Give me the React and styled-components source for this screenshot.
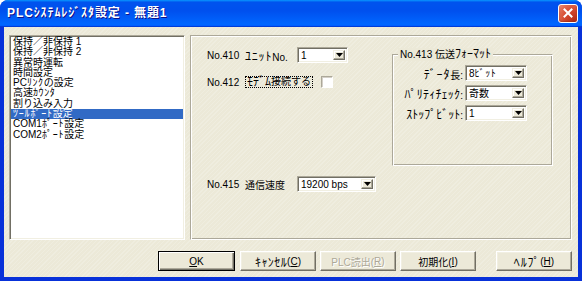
import React from "react";
import styled, { createGlobalStyle } from "styled-components";

const GlobalStyle = createGlobalStyle`
  html, body { margin: 0; padding: 0; background: #ffffff; }
  body { font-family: "Liberation Sans", "Noto Sans CJK JP", sans-serif; font-size: 10px; }
  * { box-sizing: border-box; }
`;

const FONT = `"Liberation Sans", "Noto Sans CJK JP", sans-serif`;
const BEIGE = "#ECE9D8";

const Window = styled.div`
  width: 582px;
  height: 281px;
  display: flex;
  flex-direction: column;
  border-radius: 8px 8px 0 0;
  overflow: hidden;
  background: #0831d9;
`;

const TitleBar = styled.div`
  height: 27px;
  flex: none;
  display: flex;
  align-items: center;
  justify-content: space-between;
  padding: 0 4px 0 7px;
  background: linear-gradient(
    180deg,
    #0997ff 0%,
    #0053ee 8%,
    #0050ee 40%,
    #0066ff 88%,
    #0066ff 93%,
    #005bff 95%,
    #003dd7 96%,
    #003dd7 100%
  );
`;

const Title = styled.span`
  font-family: "Liberation Sans", "Noto Sans CJK JP", sans-serif;
  font-weight: bold;
  font-size: 12px;
  letter-spacing: 0.9px;
  color: #ffffff;
  text-shadow: 1px 1px 0 #0f1089;
  line-height: 14px;
  margin-top: -1px;
`;

const CloseButton = styled.div`
  width: 20px;
  height: 19px;
  margin-top: -1px;
  border: 1px solid #ffffff;
  border-radius: 3px;
  display: flex;
  align-items: center;
  justify-content: center;
  background: radial-gradient(circle at 85% 85%, #b8301a 0%, #d4482e 45%, #e06a4f 75%, #ec937c 100%);
  background-color: #d4482e;
  box-shadow: inset 0 -1px 2px rgba(110, 20, 0, 0.45);
`;

const Frame = styled.div`
  flex: 1;
  display: flex;
  flex-direction: column;
  border-style: solid;
  border-width: 0 4px 4px 4px;
  border-color: #0831d9;
  background-color: ${BEIGE};
  background-image: repeating-linear-gradient(
    135deg,
    rgba(255, 255, 255, 0.18) 0px,
    rgba(255, 255, 255, 0.18) 1px,
    rgba(0, 0, 0, 0) 1px,
    rgba(0, 0, 0, 0) 3px
  );
  padding: 8px 6px 6px 5px;
`;

const Main = styled.div`
  height: 205px;
  display: flex;
  gap: 5px;
`;

const ListBox = styled.div`
  width: 176px;
  flex: none;
  background: #ffffff;
  border-style: solid;
  border-width: 1px;
  border-color: #aca899 #ffffff #ffffff #aca899;
  box-shadow: inset 1px 1px 0 #716f64, inset -1px -1px 0 #f1efe2;
  padding: 1px 1px;
`;

const ListItem = styled.div`
  height: 10.3px;
  line-height: 10.3px;
  font-family: ${FONT};
  font-size: 10px;
  padding-left: 2px;
  white-space: nowrap;
  color: ${(p) => (p.$selected ? "#ffffff" : "#000000")};
  background: ${(p) => (p.$selected ? "#316ac5" : "transparent")};
`;

/* half-width katakana run: the original UI font draws these larger than the fallback does */
const Kana = styled.span`
  font-size: ${(p) => p.$size ?? 12}px;
  letter-spacing: ${(p) => p.$ls ?? 0}px;
`;

const Panel = styled.div`
  flex: 1;
  border-style: solid;
  border-width: 1px;
  border-color: #aca899 #ffffff #ffffff #aca899;
  box-shadow: inset 1px 1px 0 #ffffff, inset -1px -1px 0 #aca899;
  padding: 11px 0 0 16px;
  display: flex;
  flex-direction: column;
`;

const TopSection = styled.div`
  display: flex;
  align-items: flex-start;
`;

const LeftCol = styled.div`
  display: flex;
  flex-direction: column;
  gap: 11px;
`;

const Row = styled.div`
  height: 16px;
  display: flex;
  align-items: center;
  margin-top: ${(p) => p.$mt || 0}px;
`;

const NoLabel = styled.span`
  width: 38px;
  flex: none;
  font-family: ${FONT};
  font-size: 10px;
  color: #000;
  white-space: nowrap;
`;

const NameLabel = styled.span`
  width: ${(p) => p.$w}px;
  flex: none;
  font-family: ${FONT};
  font-size: 10px;
  color: #000;
  white-space: nowrap;
`;

const FocusLabel = styled.span`
  font-family: ${FONT};
  font-size: 10px;
  color: #000;
  white-space: nowrap;
  border: 1px dotted #000;
  padding: 0 1px;
  line-height: 10px;
  height: 12px;
  display: inline-flex;
  align-items: center;
`;

const CheckBox = styled.span`
  width: 12px;
  height: 12px;
  margin-left: 8px;
  background: #ffffff;
  border-style: solid;
  border-width: 1px;
  border-color: #aca899 #ffffff #ffffff #aca899;
  box-shadow: inset 1px 1px 0 #d4d0c8;
`;

const ComboBox = styled.div`
  width: ${(p) => p.$w}px;
  height: 16px;
  flex: none;
  display: flex;
  align-items: stretch;
  background: #ffffff;
  border-style: solid;
  border-width: 1px;
  border-color: #aca899 #ffffff #ffffff #aca899;
  box-shadow: inset 1px 1px 0 #716f64, inset -1px -1px 0 #f1efe2;
  padding: 2px 2px 2px 2px;
`;

const ComboText = styled.span`
  flex: 1;
  font-family: ${FONT};
  font-size: 10px;
  line-height: 12px;
  color: #000;
  padding-left: 1px;
  white-space: nowrap;
`;

const ComboArrow = styled.span`
  width: 12px;
  flex: none;
  display: flex;
  align-items: center;
  justify-content: center;
  background: ${BEIGE};
  border-style: solid;
  border-width: 1px;
  border-color: #f1efe2 #716f64 #716f64 #f1efe2;
  box-shadow: inset -1px -1px 0 #aca899, inset 1px 1px 0 #ffffff;
`;

const GroupBox = styled.div`
  position: relative;
  width: 161px;
  height: 112px;
  margin-left: auto;
  margin-right: 18px;
  margin-top: 7px;
  border-style: solid;
  border-width: 1px;
  border-color: #aca899 #ffffff #ffffff #aca899;
  box-shadow: inset 1px 1px 0 #ffffff, inset -1px -1px 0 #aca899;
  padding: 10px 25px 0 0;
  display: grid;
  grid-template-columns: 1fr 62px;
  grid-auto-rows: 16px;
  column-gap: 2px;
  row-gap: 4px;
  align-content: start;
  align-items: center;
`;

const Legend = styled.span`
  position: absolute;
  top: -7px;
  left: 5px;
  padding: 0 2px;
  background: ${BEIGE};
  font-family: ${FONT};
  font-size: 10px;
  line-height: 12px;
  color: #000;
  white-space: nowrap;
`;

const GroupLabel = styled.span`
  text-align: right;
  font-family: ${FONT};
  font-size: 10px;
  color: #000;
  white-space: nowrap;
`;

const ButtonBar = styled.div`
  margin-top: 11px;
  height: 20px;
  display: flex;
  justify-content: flex-end;
  gap: 4px;
`;

const Button = styled.div`
  width: ${(p) => (p.$default ? 77 : 76)}px;
  height: 20px;
  margin-left: ${(p) => p.$ml || 0}px;
  margin-right: ${(p) => (p.$default ? 1 : 0)}px;
  display: flex;
  align-items: center;
  justify-content: center;
  font-family: ${FONT};
  font-size: 10px;
  background: ${BEIGE};
  border: 1px solid ${(p) => (p.$default ? "#000000" : "transparent")};
  border-color: ${(p) => (p.$default ? "#000000" : "#ffffff #716f64 #716f64 #ffffff")};
  box-shadow: ${(p) =>
    p.$default
      ? "inset 1px 1px 0 #ffffff, inset -1px -1px 0 #716f64, inset -2px -2px 0 #aca899"
      : "inset -1px -1px 0 #aca899, inset 1px 1px 0 #f1efe2"};
  color: ${(p) => (p.$disabled ? "#aca899" : "#000000")};
  text-shadow: ${(p) => (p.$disabled ? "1px 1px 0 #ffffff" : "none")};
  white-space: nowrap;
`;

const U = styled.span`
  text-decoration: underline;
`;

function Arrow() {
  return (
    <svg width="7" height="4" viewBox="0 0 7 4">
      <path d="M0 0H7L3.5 4Z" fill="#000" />
    </svg>
  );
}

function Combo({ w, children }) {
  return (
    <ComboBox $w={w}>
      <ComboText>{children}</ComboText>
      <ComboArrow>
        <Arrow />
      </ComboArrow>
    </ComboBox>
  );
}

const items = [
  <>保持／非保持 1</>,
  <>保持／非保持 2</>,
  <>異常時運転</>,
  <>時間設定</>,
  <>PC<Kana $size={10} $ls={0.6}>ﾘﾝｸ</Kana>の設定</>,
  <>高速<Kana $size={10} $ls={0.6}>ｶｳﾝﾀ</Kana></>,
  <>割り込み入力</>,
  <><Kana $size={10} $ls={0.8}>ﾂｰﾙﾎﾟｰﾄ</Kana>設定</>,
  <>COM1<Kana $size={10} $ls={0.8}>ﾎﾟｰﾄ</Kana>設定</>,
  <>COM2<Kana $size={10} $ls={0.8}>ﾎﾟｰﾄ</Kana>設定</>,
];

export default function App() {
  return (
    <>
      <GlobalStyle />
      <Window>
        <TitleBar>
          <Title>PLCｼｽﾃﾑﾚｼﾞｽﾀ設定 - 無題1</Title>
          <CloseButton>
            <svg width="10" height="10" viewBox="0 0 10 10">
              <path d="M1.5 1.5L8.5 8.5M8.5 1.5L1.5 8.5" stroke="#fff" strokeWidth="2" strokeLinecap="square" />
            </svg>
          </CloseButton>
        </TitleBar>
        <Frame>
          <Main>
            <ListBox>
              {items.map((t, i) => (
                <ListItem key={i} $selected={i === 7}>
                  {t}
                </ListItem>
              ))}
            </ListBox>
            <Panel>
              <TopSection>
                <LeftCol>
                  <Row>
                    <NoLabel>No.410</NoLabel>
                    <NameLabel $w={52}>
                      <Kana $ls={0.8}>ﾕﾆｯﾄ</Kana>No.
                    </NameLabel>
                    <Combo w={51}>1</Combo>
                  </Row>
                  <Row>
                    <NoLabel>No.412</NoLabel>
                    <FocusLabel>
                      <Kana>ﾓﾃﾞﾑ</Kana>接続する
                    </FocusLabel>
                    <CheckBox />
                  </Row>
                </LeftCol>
                <GroupBox>
                  <Legend>
                    No.413 伝送<Kana>ﾌｫｰﾏｯﾄ</Kana>
                  </Legend>
                  <GroupLabel>
                    <Kana $ls={0.8}>ﾃﾞｰﾀ</Kana>長:
                  </GroupLabel>
                  <Combo w={62}>
                    8<Kana $size={10} $ls={0.6}>ﾋﾞｯﾄ</Kana>
                  </Combo>
                  <GroupLabel>
                    <Kana $ls={0.2}>ﾊﾟﾘﾃｨﾁｪｯｸ</Kana>:
                  </GroupLabel>
                  <Combo w={62}>奇数</Combo>
                  <GroupLabel>
                    <Kana>ｽﾄｯﾌﾟﾋﾞｯﾄ</Kana>:
                  </GroupLabel>
                  <Combo w={62}>1</Combo>
                </GroupBox>
              </TopSection>
              <Row $mt={10}>
                <NoLabel>No.415</NoLabel>
                <NameLabel $w={52}>通信速度</NameLabel>
                <Combo w={79}>19200 bps</Combo>
              </Row>
            </Panel>
          </Main>
          <ButtonBar>
            <Button $default>
              <U>O</U>K
            </Button>
            <Button>
              <Kana $ls={0.4}>ｷｬﾝｾﾙ</Kana>(<U>C</U>)
            </Button>
            <Button $disabled>
              PLC読出(<U>R</U>)
            </Button>
            <Button>
              初期化(<U>I</U>)
            </Button>
            <Button $ml={16}>
              <Kana $ls={0.8}>ﾍﾙﾌﾟ</Kana>(<U>H</U>)
            </Button>
          </ButtonBar>
        </Frame>
      </Window>
    </>
  );
}
